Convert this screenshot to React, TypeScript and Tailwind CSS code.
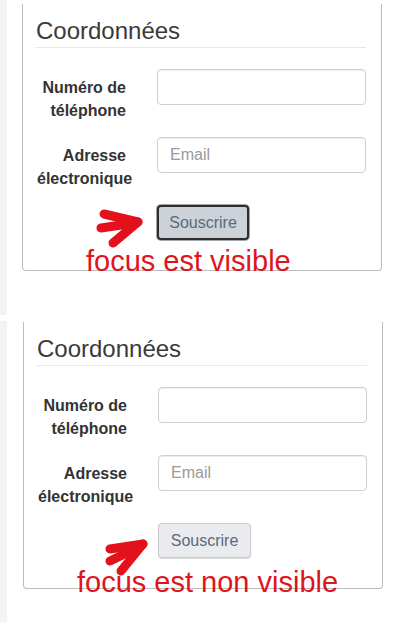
import React from "react";

type PanelProps = {
  focused: boolean;
  note: string;
  noteClass: string;
  arrow: React.ReactNode;
};

function Panel({ focused, note, noteClass, arrow }: PanelProps) {
  return (
    <div className="relative w-[360px] border-x border-b border-[#bdbdbd] rounded-b-[4px] pl-[12px] pr-[15px] pt-[14px] pb-[30px] bg-white">
      <div className="text-[24px] leading-[26px] text-[#3a3a3a] pl-[1px] pb-[3px] border-b border-[#e8e8e8]">
        Coordonnées
      </div>
      <div className="mt-[21px] flex">
        <label className="w-[122px] shrink-0 pl-[2px] pr-[31px] pt-[7px] text-right font-bold text-[16px] leading-[23px] text-[#333333]">
          Numéro de téléphone
        </label>
        <input
          type="text"
          className="flex-1 min-w-0 h-[36px] border border-[#d0d0d0] rounded-[4px] px-[12px] text-[16px] shadow-[inset_0_1px_1px_rgba(0,0,0,0.075)] outline-none"
        />
      </div>
      <div className="mt-[15px] flex">
        <label className="w-[122px] shrink-0 pl-[2px] pr-[31px] pt-[7px] text-right font-bold text-[16px] leading-[23px] text-[#333333]">
          Adresse électronique
        </label>
        <input
          type="text"
          placeholder="Email"
          className="flex-1 min-w-0 h-[36px] border border-[#d0d0d0] rounded-[4px] px-[12px] text-[16px] placeholder:text-[#9a9a9a] shadow-[inset_0_1px_1px_rgba(0,0,0,0.075)] outline-none"
        />
      </div>
      <div className="mt-[15px] pl-[122px]">
        {focused ? (
          <button className="w-[92px] h-[35px] rounded-[4px] border-2 border-[#2e2e2e] bg-[#cdd1d8] text-[16px] text-[#5a6a7c] shadow-[0_0_0_1px_#a0a6ae]">
            Souscrire
          </button>
        ) : (
          <button className="w-[93px] h-[35px] rounded-[4px] border border-[#c6cace] bg-[#e9ebee] text-[16px] text-[#5a6a7c] shadow-[0_1px_1px_rgba(0,0,0,0.15)]">
            Souscrire
          </button>
        )}
      </div>
      <svg
        className="absolute left-0 top-0 pointer-events-none overflow-visible"
        width="360"
        height="280"
      >
        {arrow}
      </svg>
      <div
        className={`absolute whitespace-nowrap text-[29px] leading-[29px] text-[#e0141c] ${noteClass}`}
      >
        {note}
      </div>
    </div>
  );
}

export default function App() {
  const font = { fontFamily: '"Liberation Sans", Arial, sans-serif' };
  return (
    <div className="w-[418px] h-[637px] bg-white overflow-hidden" style={font}>
      <div className="flex h-[315px]">
        <div className="w-[7px] bg-[#f3f3f3]" />
        <div className="pl-[15px] pt-[4px]">
          <Panel
            focused
            note="focus est visible"
            noteClass="left-[63px] top-[243px]"
            arrow={
              <g
                stroke="#e3111b"
                strokeWidth="9"
                strokeLinecap="round"
                strokeLinejoin="round"
                fill="none"
              >
                <path d="M81 210 L115 218" />
                <path d="M78 224 L112 219" />
                <path d="M90 239 L115 218" />
              </g>
            }
          />
        </div>
      </div>
      <div className="flex h-[301px] mt-[6px]">
        <div className="w-[7px] bg-[#f3f3f3]" />
        <div className="pl-[16px] pt-[1px]">
          <Panel
            focused={false}
            note="focus est non visible"
            noteClass="left-[53px] top-[246px]"
            arrow={
              <g
                stroke="#e3111b"
                strokeWidth="9"
                strokeLinecap="round"
                strokeLinejoin="round"
                fill="none"
              >
                <path d="M86 227 L119 222" />
                <path d="M86 239 L117 224" />
                <path d="M97 249 L119 222" />
              </g>
            }
          />
        </div>
      </div>
    </div>
  );
}
